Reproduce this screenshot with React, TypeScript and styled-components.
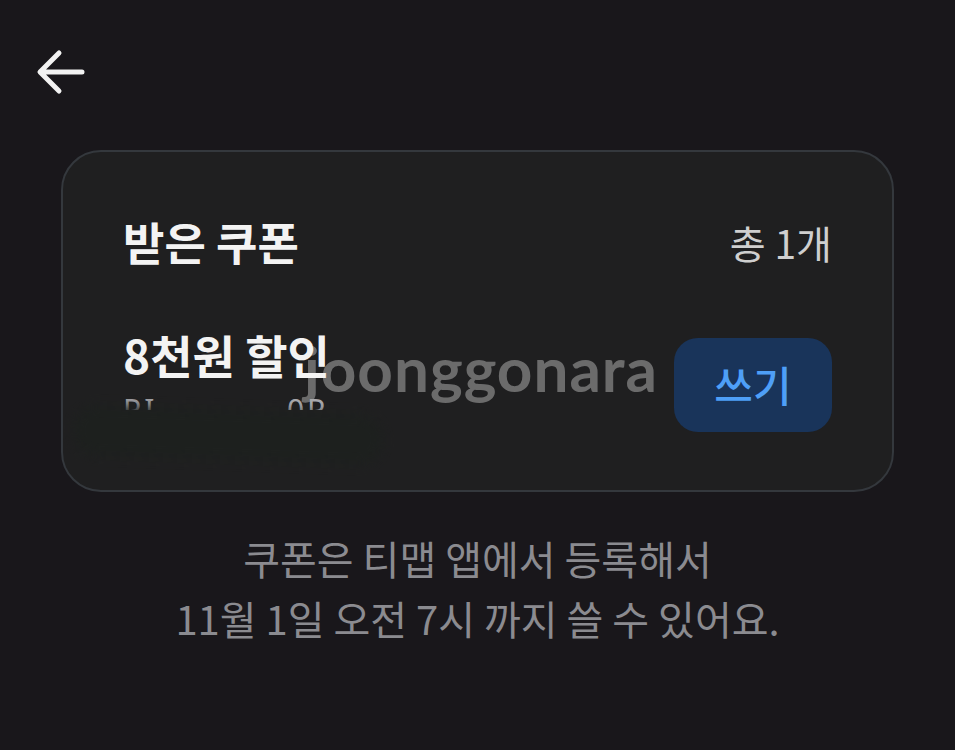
import React from "react";
import styled, { createGlobalStyle } from "styled-components";

const Global = createGlobalStyle`
  html, body { margin: 0; padding: 0; background: #19171b; }
  body { font-family: "Noto Sans CJK KR", "Noto Sans", sans-serif; }
`;

const Page = styled.div`
  width: 955px;
  height: 750px;
  background: #19171b;
  box-sizing: border-box;
  padding: 48px 61px 0 61px;
  display: flex;
  flex-direction: column;
`;

const BackButton = styled.button`
  width: 56px;
  height: 48px;
  margin-left: -28px;
  padding: 0;
  border: 0;
  background: transparent;
  display: flex;
  align-items: center;
  justify-content: center;
  color: #f2f2f2;
`;

const Card = styled.section`
  margin-top: 54px;
  height: 342px;
  box-sizing: border-box;
  background: #1f1f20;
  border: 2px solid #34383d;
  border-radius: 40px;
  padding: 62px 60px 0 60px;
  display: flex;
  flex-direction: column;
  position: relative;
  overflow: hidden;
`;

const HeaderRow = styled.div`
  display: flex;
  align-items: center;
  justify-content: space-between;
  height: 56px;
`;

const Title = styled.h2`
  margin: 0;
  font-size: 45px;
  font-weight: 700;
  color: #f3f3f3;
  line-height: 56px;
`;

const Count = styled.span`
  font-size: 39px;
  font-weight: 400;
  color: #cfcfcf;
  line-height: 56px;
`;

const CouponRow = styled.div`
  margin-top: 68px;
  display: flex;
  align-items: flex-start;
  justify-content: space-between;
`;

const CouponInfo = styled.div`
  display: flex;
  flex-direction: column;
  position: relative;
`;

const CouponName = styled.div`
  position: relative;
  z-index: 2;
  font-size: 46px;
  font-weight: 700;
  color: #f3f3f3;
  line-height: 60px;
  margin-top: -14px;
`;

const CouponSub = styled.div`
  font-family: "Noto Sans", "Noto Sans CJK KR", sans-serif;
  font-size: 30px;
  color: #a9a9ad;
  line-height: 40px;
  margin-top: 6px;
  height: 20px;
  overflow: hidden;
  letter-spacing: 3px;
`;

const Smear = styled.div`
  position: absolute;
  left: -50px;
  top: 72px;
  width: 310px;
  height: 50px;
  background: #1d201e;
  border-radius: 40px;
  filter: blur(6px);
  transform: rotate(2deg);
`;

const UseButton = styled.button`
  width: 158px;
  height: 94px;
  border: 0;
  border-radius: 24px;
  background: #19345a;
  color: #4e9ff7;
  font-family: "Noto Sans CJK KR", sans-serif;
  font-size: 42px;
  font-weight: 500;
  display: flex;
  align-items: center;
  justify-content: center;
  padding: 0 0 4px 0;
`;

const Watermark = styled.div`
  position: absolute;
  z-index: 1;
  left: 241px;
  top: 185px;
  font-family: "Lato", "Noto Sans", sans-serif;
  font-size: 62px;
  font-weight: 700;
  letter-spacing: 1px;
  color: rgba(170, 170, 170, 0.55);
  pointer-events: none;
  line-height: 1;
`;

const Notice = styled.p`
  margin: 36px 0 0 0;
  text-align: center;
  font-size: 40px;
  font-weight: 400;
  line-height: 60px;
  color: #8b8b90;
`;

export default function App() {
  return (
    <>
      <Global />
      <Page>
        <BackButton aria-label="뒤로">
          <svg width="50" height="46" viewBox="0 0 50 46" fill="none">
            <path
              d="M46 23H5M23 4L4 23L23 42"
              stroke="currentColor"
              strokeWidth="5"
              strokeLinecap="round"
              strokeLinejoin="round"
            />
          </svg>
        </BackButton>
        <Card>
          <HeaderRow>
            <Title>받은 쿠폰</Title>
            <Count>총 1개</Count>
          </HeaderRow>
          <CouponRow>
            <CouponInfo>
              <CouponName>8천원 할인</CouponName>
              <CouponSub>PI&nbsp;&nbsp;&nbsp;&nbsp;&nbsp;&nbsp;&nbsp;&nbsp;&nbsp;&nbsp;&nbsp;&nbsp;0P</CouponSub>
              <Smear />
            </CouponInfo>
            <UseButton>쓰기</UseButton>
          </CouponRow>
          <Watermark>joonggonara</Watermark>
        </Card>
        <Notice>
          쿠폰은 티맵 앱에서 등록해서
          <br />
          11월 1일 오전 7시 까지 쓸 수 있어요.
        </Notice>
      </Page>
    </>
  );
}
